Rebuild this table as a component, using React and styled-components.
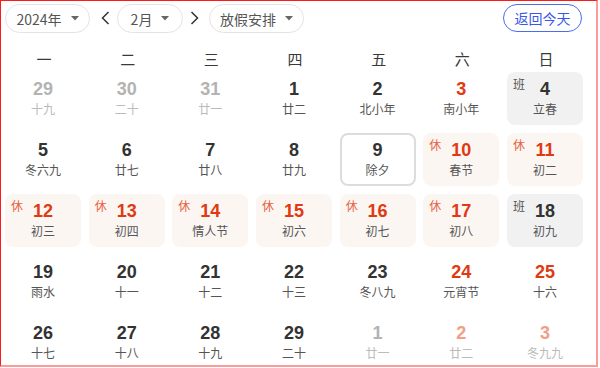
import React from 'react';
import styled, { createGlobalStyle } from 'styled-components';

const GlobalStyle = createGlobalStyle`
  body {
    margin: 0;
    background: #fff;
    font-family: 'Liberation Sans', 'Noto Sans CJK SC', sans-serif;
  }
`;

const weekdays = ['一', '二', '三', '四', '五', '六', '日'];

// type: other (other month), rest (休), work (班), today
const days = [
  { d: 29, l: '十九', type: 'other' },
  { d: 30, l: '二十', type: 'other' },
  { d: 31, l: '廿一', type: 'other' },
  { d: 1, l: '廿二' },
  { d: 2, l: '北小年' },
  { d: 3, l: '南小年', red: true },
  { d: 4, l: '立春', type: 'work' },
  { d: 5, l: '冬六九' },
  { d: 6, l: '廿七' },
  { d: 7, l: '廿八' },
  { d: 8, l: '廿九' },
  { d: 9, l: '除夕', type: 'today' },
  { d: 10, l: '春节', type: 'rest' },
  { d: 11, l: '初二', type: 'rest' },
  { d: 12, l: '初三', type: 'rest' },
  { d: 13, l: '初四', type: 'rest' },
  { d: 14, l: '情人节', type: 'rest' },
  { d: 15, l: '初六', type: 'rest' },
  { d: 16, l: '初七', type: 'rest' },
  { d: 17, l: '初八', type: 'rest' },
  { d: 18, l: '初九', type: 'work' },
  { d: 19, l: '雨水' },
  { d: 20, l: '十一' },
  { d: 21, l: '十二' },
  { d: 22, l: '十三' },
  { d: 23, l: '冬八九' },
  { d: 24, l: '元宵节', red: true },
  { d: 25, l: '十六', red: true },
  { d: 26, l: '十七' },
  { d: 27, l: '十八' },
  { d: 28, l: '十九' },
  { d: 29, l: '二十' },
  { d: 1, l: '廿一', type: 'other' },
  { d: 2, l: '廿二', type: 'other', red: true },
  { d: 3, l: '冬九九', type: 'other', red: true },
];

const Caret = () => (
  <svg width="8" height="5" viewBox="0 0 8 5">
    <path d="M0 0 L8 0 L4 4.5 Z" fill="#666" />
  </svg>
);

const Chevron = ({ dir }) => (
  <svg width="9" height="14" viewBox="0 0 9 14">
    <polyline
      points={dir === 'left' ? '7.5,1 1.5,7 7.5,13' : '1.5,1 7.5,7 1.5,13'}
      fill="none"
      stroke="#333"
      strokeWidth="1.5"
    />
  </svg>
);

const App = () => {
  return (
    <Frame>
      <GlobalStyle />
      <Toolbar>
        <Pill $w={85}>
          2024年 <Caret />
        </Pill>
        <ArrowButton $l={11} $r={7}>
          <Chevron dir="left" />
        </ArrowButton>
        <Pill $w={66}>
          2月 <Caret />
        </Pill>
        <ArrowButton $l={7} $r={10}>
          <Chevron dir="right" />
        </ArrowButton>
        <Pill $w={95}>
          放假安排 <Caret />
        </Pill>
        <TodayButton>返回今天</TodayButton>
      </Toolbar>

      <WeekRow>
        {weekdays.map((w) => (
          <span key={w}>{w}</span>
        ))}
      </WeekRow>

      <Grid>
        {days.map((day, i) => (
          <Cell key={i} $type={day.type}>
            {day.type === 'rest' && <Tag $rest>休</Tag>}
            {day.type === 'work' && <Tag>班</Tag>}
            <Num $type={day.type} $red={day.red || day.type === 'rest'}>
              {day.d}
            </Num>
            <Lunar $other={day.type === 'other'}>{day.l}</Lunar>
          </Cell>
        ))}
      </Grid>
    </Frame>
  );
};

const Frame = styled.div`
  width: 598px;
  height: 367px;
  box-sizing: border-box;
  border-top: 1px solid #ff1a1a;
  border-left: 1px solid #ff1a1a;
  border-right: 2px solid #ff9a9a;
  border-bottom: 2px solid #ff9a9a;
  overflow: hidden;
`;

const Toolbar = styled.div`
  display: flex;
  align-items: center;
  padding: 2px 14px 0 4px;
  height: 30px;
`;

const Pill = styled.div`
  width: ${(p) => p.$w}px;
  height: 29px;
  box-sizing: border-box;
  border: 1px solid #e3e3e3;
  border-radius: 15px;
  display: flex;
  align-items: center;
  justify-content: center;
  gap: 9px;
  font-size: 14px;
  color: #555;
  font-family: 'Noto Sans CJK SC', 'Liberation Sans', sans-serif;
  margin-top: 1px;
`;

const ArrowButton = styled.div`
  display: flex;
  align-items: center;
  margin: 0 ${(p) => p.$r}px 0 ${(p) => p.$l}px;
  height: 29px;
`;

const TodayButton = styled.div`
  margin-left: auto;
  width: 79px;
  height: 28px;
  box-sizing: border-box;
  border: 1px solid #4b6cf0;
  border-radius: 14px;
  display: flex;
  align-items: center;
  justify-content: center;
  font-size: 14px;
  color: #3858e6;
  font-family: 'Noto Sans CJK SC', sans-serif;
`;

const WeekRow = styled.div`
  display: grid;
  grid-template-columns: repeat(7, 1fr);
  column-gap: 7.67px;
  padding: 0 5px;
  width: 578px;
  margin-top: 11px;
  height: 28px;
  align-items: center;
  font-family: 'Noto Sans CJK SC', sans-serif;
  font-size: 15px;
  color: #3a3a3a;

  span {
    text-align: center;
  }
`;

const Grid = styled.div`
  display: grid;
  grid-template-columns: repeat(7, 76px);
  grid-auto-rows: 53px;
  column-gap: 7.67px;
  row-gap: 8px;
  padding: 0 4px;
`;

const Cell = styled.div`
  position: relative;
  box-sizing: border-box;
  border-radius: 8px;
  display: flex;
  flex-direction: column;
  align-items: center;
  background: ${(p) =>
    p.$type === 'rest' ? '#fcf6f3' : p.$type === 'work' ? '#f1f1f1' : '#fff'};
  border: ${(p) => (p.$type === 'today' ? '2px solid #dcdcdc' : 'none')};
  padding-top: ${(p) => (p.$type === 'today' ? '4px' : '6px')};
`;

const Tag = styled.span`
  position: absolute;
  left: 6px;
  top: 4px;
  font-family: 'Noto Sans CJK SC', sans-serif;
  font-size: 12px;
  line-height: 16px;
  color: ${(p) => (p.$rest ? '#e8603e' : '#555')};
`;

const Num = styled.div`
  font-size: 18px;
  font-weight: bold;
  line-height: 22px;
  color: ${(p) =>
    p.$type === 'other'
      ? p.$red
        ? '#f0a084'
        : '#b3b3b3'
      : p.$red
      ? '#df3a12'
      : '#333'};
`;

const Lunar = styled.div`
  margin-top: 1px;
  font-family: 'Noto Sans CJK SC', sans-serif;
  font-size: 12px;
  line-height: 16px;
  color: ${(p) => (p.$other ? '#bbb' : '#555')};
`;

export default App;
